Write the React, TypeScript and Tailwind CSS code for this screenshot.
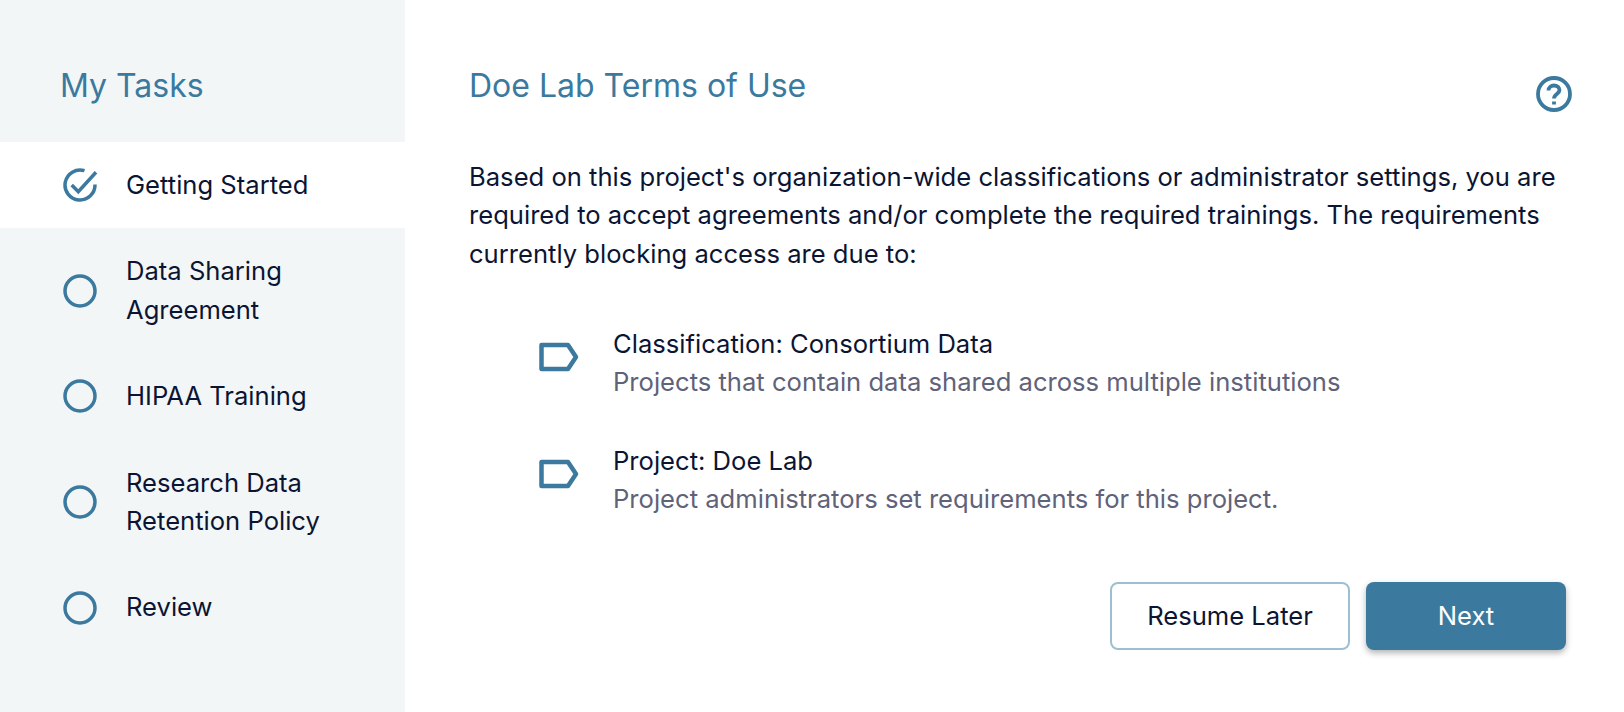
const tasks = [
  { label: ["Getting Started"], done: true },
  { label: ["Data Sharing", "Agreement"] },
  { label: ["HIPAA Training"] },
  { label: ["Research Data", "Retention Policy"] },
  { label: ["Review"] },
];

const reasons = [
  {
    title: "Classification: Consortium Data",
    text: "Projects that contain data shared across multiple institutions",
  },
  {
    title: "Project: Doe Lab",
    text: "Project administrators set requirements for this project.",
  },
];

function CheckIcon() {
  return (
    <svg width="36" height="36" viewBox="0 0 36 36" fill="none" stroke="#3b7a9e" strokeWidth="3.5">
      <path d="M33 17.5A15 15 0 1 1 22.500 3.700" />
      <path d="M9.700 18L16.300 24.700L34 5.300" />
    </svg>
  );
}

function CircleIcon() {
  return (
    <svg width="36" height="36" viewBox="0 0 36 36" fill="none" stroke="#3b7a9e" strokeWidth="3.5">
      <circle cx="18" cy="18" r="15" />
    </svg>
  );
}

function TagIcon() {
  return (
    <svg width="40" height="30" viewBox="0 0 40 30" fill="none" stroke="#3b7a9e" strokeWidth="4.5" strokeLinejoin="round">
      <path d="M2.500 3H29L37 15L29 27H2.500Z" />
    </svg>
  );
}

function HelpIcon() {
  return (
    <svg width="36" height="36" viewBox="0 0 36 36" fill="none" stroke="#3b7a9e" strokeWidth="3.8">
      <circle cx="18" cy="18" r="16" />
      <path d="M12.500 14.500C12.500 11.500 15 9.500 18 9.500C21 9.500 23.500 11.500 23.500 14C23.500 18 18 18 18 22.500" />
      <path d="M18 25.500V28.500" />
    </svg>
  );
}

export default function App() {
  return (
    <div className="flex h-[712px] w-[1624px] overflow-hidden bg-white font-['Inter',sans-serif] text-[#0b1533]">
      <aside className="w-[405px] shrink-0 bg-[#f3f6f7]">
        <h2 className="px-[60px] pb-[36px] pt-[66px] text-[32px] leading-[40px] text-[#3b7a9e]">My Tasks</h2>
        <ul>
          {tasks.map((task) => (
            <li
              key={task.label[0]}
              className={`flex items-center gap-[28px] py-[24px] pl-[62px] text-[25.6px] leading-[38.4px] ${task.done ? "bg-white" : ""}`}
            >
              {task.done ? <CheckIcon /> : <CircleIcon />}
              <div>
                {task.label.map((line) => (
                  <div key={line}>{line}</div>
                ))}
              </div>
            </li>
          ))}
        </ul>
      </aside>
      <main className="flex-1 pl-[64px] pr-[52px] pt-[66px]">
        <div className="flex items-start justify-between">
          <h1 className="text-[32px] leading-[40px] text-[#3b7a9e]">Doe Lab Terms of Use</h1>
          <div className="mt-[10px]">
            <HelpIcon />
          </div>
        </div>
        <p className="mt-[46px] text-[25.6px] leading-[38.4px]">
          Based on this project's organization-wide classifications or administrator settings, you are required to accept agreements and/or complete the required trainings. The requirements currently blocking access are due to:
        </p>
        <div className="mt-[52px] flex flex-col gap-[41px] pl-[70px]">
          {reasons.map((reason) => (
            <div key={reason.title} className="flex items-start gap-[34px]">
              <div className="mt-[17px]">
                <TagIcon />
              </div>
              <div>
                <div className="text-[25.6px] leading-[38px]">{reason.title}</div>
                <div className="text-[25.6px] leading-[38px] text-[#5f6279]">{reason.text}</div>
              </div>
            </div>
          ))}
        </div>
        <div className="mt-[64px] flex justify-end gap-[16px] pr-[6px]">
          <button className="h-[68px] w-[240px] rounded-[8px] border-2 border-[#9dbfd1] bg-white text-[25.6px]">Resume Later</button>
          <button className="h-[68px] w-[200px] rounded-[8px] bg-[#3b7a9e] text-[25.6px] text-white shadow-[0_3px_6px_rgba(0,0,0,0.3)]">Next</button>
        </div>
      </main>
    </div>
  );
}
